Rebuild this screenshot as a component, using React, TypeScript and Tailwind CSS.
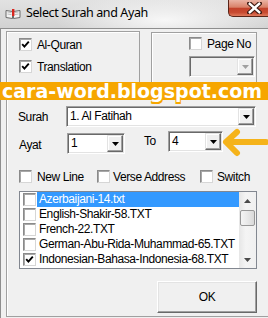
import React from "react";

const files = [
  { name: "Azerbaijani-14.txt", checked: false, selected: true },
  { name: "English-Shakir-58.TXT", checked: false },
  { name: "French-22.TXT", checked: false },
  { name: "German-Abu-Rida-Muhammad-65.TXT", checked: false },
  { name: "Indonesian-Bahasa-Indonesia-68.TXT", checked: true },
];

function Tick() {
  return (
    <svg width="9" height="9" viewBox="0 0 9 9">
      <path d="M1.2 4.2 L3.4 6.6 L7.8 1.6" fill="none" stroke="#000" strokeWidth="1.9" />
    </svg>
  );
}

function Box({ checked }: { checked?: boolean }) {
  return (
    <span className="flex h-[13px] w-[13px] shrink-0 items-center justify-center border border-t-[#8a8a8a] border-l-[#8a8a8a] border-b-[#d6d6d6] border-r-[#d6d6d6] bg-white shadow-[inset_1px_1px_0_#a8a8a8]">
      {checked && <Tick />}
    </span>
  );
}

function Combo({ className, text, disabled }: { className: string; text?: string; disabled?: boolean }) {
  return (
    <div
      className={`flex h-[21px] border border-t-[#a0a0a0] border-l-[#a0a0a0] border-b-white border-r-white p-[1px] shadow-[inset_1px_1px_0_#696969,inset_-1px_-1px_0_#e3e3e3] ${
        disabled ? "bg-[#f0f0f0]" : "bg-white"
      } ${className}`}
    >
      <div className="flex-1 truncate pl-[2px] leading-[17px]">{text}</div>
      <div className="flex w-[16px] items-center justify-center border border-t-[#e3e3e3] border-l-[#e3e3e3] border-b-[#696969] border-r-[#696969] bg-[#f0f0f0] shadow-[inset_-1px_-1px_0_#a0a0a0,inset_1px_1px_0_#fff]">
        <svg width="7" height="4" viewBox="0 0 7 4">
          <path d="M0 0h7L3.5 4z" fill={disabled ? "#a0a0a0" : "#000"} />
        </svg>
      </div>
    </div>
  );
}

function TitleBar() {
  return (
    <div className="flex h-[28px] shrink-0 items-start bg-[radial-gradient(ellipse_110px_26px_at_165px_20px,#f7f7f7,transparent),linear-gradient(#e2e2e2,#d2d2d2)]">
      <svg className="ml-[5px] mt-[9px]" width="16" height="10" viewBox="0 0 16 10">
        <path d="M1 1.5 L7.5 2.5 L7.5 9.5 L1 8.5 Z" fill="#f4f4f4" stroke="#6b6b6b" strokeWidth="1" />
        <path d="M15 1.5 L8.5 2.5 L8.5 9.5 L15 8.5 Z" fill="#f4f4f4" stroke="#6b6b6b" strokeWidth="1" />
        <path d="M2.5 3 L6.5 3.6 M2.5 5 L6.5 5.6 M9.5 3.6 L13.5 3 M9.5 5.6 L13.5 5" stroke="#b0b0b0" strokeWidth="0.8" />
        <rect x="7" y="0" width="2.4" height="7" fill="#d8261f" />
      </svg>
      <span className="ml-[5px] mt-[5px] font-['Noto_Sans',sans-serif] text-[12.5px] leading-[16px] text-black">
        Select Surah and Ayah
      </span>
      <div className="relative ml-auto h-[17px] w-[40px] rounded-bl-[5px] border-b border-l border-[#5a2418] bg-[linear-gradient(#eab3a4,#d98169_45%,#c2412a_52%,#c84a31_78%,#df7a5c)]">
        <svg className="absolute left-[18px] top-[2px]" width="15" height="12" viewBox="0 0 15 12">
          <path d="M2.5 1.5 L12.5 10.5 M12.5 1.5 L2.5 10.5" stroke="#3e1a12" strokeWidth="4.6" strokeLinecap="square" />
          <path d="M2.8 1.8 L12.2 10.2 M12.2 1.8 L2.8 10.2" stroke="#ffffff" strokeWidth="2.4" strokeLinecap="square" />
        </svg>
      </div>
    </div>
  );
}

export default function App() {
  return (
    <div className="relative flex h-[318px] w-[268px] flex-col overflow-hidden bg-[#d3d3d3] font-['Liberation_Sans',Arial,sans-serif] text-[12px] tracking-[-0.4px] text-black">
      <TitleBar />
      <div className="flex min-h-0 flex-1">
        <div className="w-[3px] bg-[linear-gradient(#d2d2d2,#c8c8c8)]" />
        <div className="flex-1 border-l border-t border-[#8e8e8e] bg-[#f0f0f0] pl-[5px] pt-[2px]">
          {/* top group boxes */}
          <div className="flex h-[61px]">
            <div className="w-[134px] border-l border-r border-t border-[#a0a0a0] pl-[12px] pt-[6px] shadow-[inset_1px_1px_0_#fff]">
              <div className="flex h-[13px] items-center">
                <Box checked />
                <span className="ml-[5px]">Al-Quran</span>
              </div>
              <div className="mt-[9px] flex h-[13px] items-center">
                <Box checked />
                <span className="ml-[5px]">Translation</span>
              </div>
            </div>
            <div className="ml-[11px] mt-[1px] w-[106px] border-l border-r border-t border-[#a0a0a0] pl-[37px] pt-[4px] shadow-[inset_1px_1px_0_#fff]">
              <div className="flex h-[13px] items-center">
                <Box />
                <span className="ml-[5px]">Page No</span>
              </div>
              <Combo className="mt-[6px] w-[66px]" disabled />
            </div>
          </div>

          {/* main group */}
          <div className="h-[225px] w-[264px] border-b border-l border-t border-[#a0a0a0] shadow-[inset_1px_1px_0_#fff]">
            <div className="mt-[13px] flex h-[21px] items-center">
              <span className="ml-[11px] w-[48px]">Surah</span>
              <Combo className="w-[190px]" text="1. Al Fatihah" />
            </div>

            <div className="mt-[4px] flex h-[23px] items-start">
              <span className="ml-[12px] mt-[7px] w-[48px] leading-[14px]">Ayat</span>
              <Combo className="mt-[2px] w-[58px]" text="1" />
              <span className="ml-[19px] mt-[3px] w-[24px] leading-[14px]">To</span>
              <Combo className="w-[55px]" text="4" />
            </div>

            <div className="ml-[12px] mt-[16px] flex h-[13px] items-center">
              <div className="flex w-[78px] items-center">
                <Box />
                <span className="ml-[5px]">New Line</span>
              </div>
              <div className="flex w-[103px] items-center">
                <Box />
                <span className="ml-[3px]">Verse Address</span>
              </div>
              <div className="flex items-center">
                <Box />
                <span className="ml-[4px]">Switch</span>
              </div>
            </div>

            <div className="ml-[12px] mt-[8px] flex h-[78px] w-[238px] border border-[#828790] bg-white">
              <div className="flex-1">
                {files.map((f) => (
                  <div key={f.name} className="flex h-[15px] items-center">
                    <span className="ml-[3px]">
                      <Box checked={f.checked} />
                    </span>
                    <span
                      className={`ml-[1px] flex-1 px-[2px] leading-[15px] ${
                        f.selected ? "bg-[#3399ff] text-white" : ""
                      }`}
                    >
                      {f.name}
                    </span>
                  </div>
                ))}
              </div>
              <div className="flex w-[17px] flex-col bg-[linear-gradient(90deg,#e6e6e6,#f4f4f4_40%,#f0f0f0)]">
                <div className="flex h-[17px] items-center justify-center">
                  <svg width="7" height="4" viewBox="0 0 7 4">
                    <path d="M0 4h7L3.5 0z" fill="#4a4a4a" />
                  </svg>
                </div>
                <div className="mx-[1px] mt-[1px] h-[16px] rounded-[2px] border border-[#979797] bg-[linear-gradient(90deg,#f4f4f4,#e8e8e8_50%,#d9d9d9)]" />
                <div className="mt-auto flex h-[17px] items-center justify-center">
                  <svg width="7" height="4" viewBox="0 0 7 4">
                    <path d="M0 0h7L3.5 4z" fill="#4a4a4a" />
                  </svg>
                </div>
              </div>
            </div>

            <div className="ml-[150px] mt-[12px] flex h-[32px] w-[100px] items-center justify-center border border-t-white border-l-white border-b-[#696969] border-r-[#696969] bg-[#f0f0f0] shadow-[inset_-1px_-1px_0_#a0a0a0,inset_1px_1px_0_#e3e3e3]">
              OK
            </div>
          </div>
        </div>
      </div>

      {/* watermark banner */}
      <div className="absolute left-0 top-[82px] h-[18px] w-full bg-[#f6a600]">
        <span className="ml-[2px] block font-['DejaVu_Sans',sans-serif] text-[19px] font-bold leading-[18px] tracking-[0px] text-white [text-shadow:0_1px_0_#f6a600,0_2px_0_#f6a600,1px_2px_0_#f6a600,-1px_2px_0_#f6a600]">
          cara-word.blogspot.com
        </span>
      </div>

      {/* annotation arrow */}
      <svg className="absolute left-[220px] top-[126px]" width="48" height="32" viewBox="0 0 48 32">
        <path d="M46 16 L8 16 M17 6 L6 16 L17 27" fill="none" stroke="#f5b31a" strokeWidth="6" strokeLinecap="round" strokeLinejoin="round" />
      </svg>
    </div>
  );
}
